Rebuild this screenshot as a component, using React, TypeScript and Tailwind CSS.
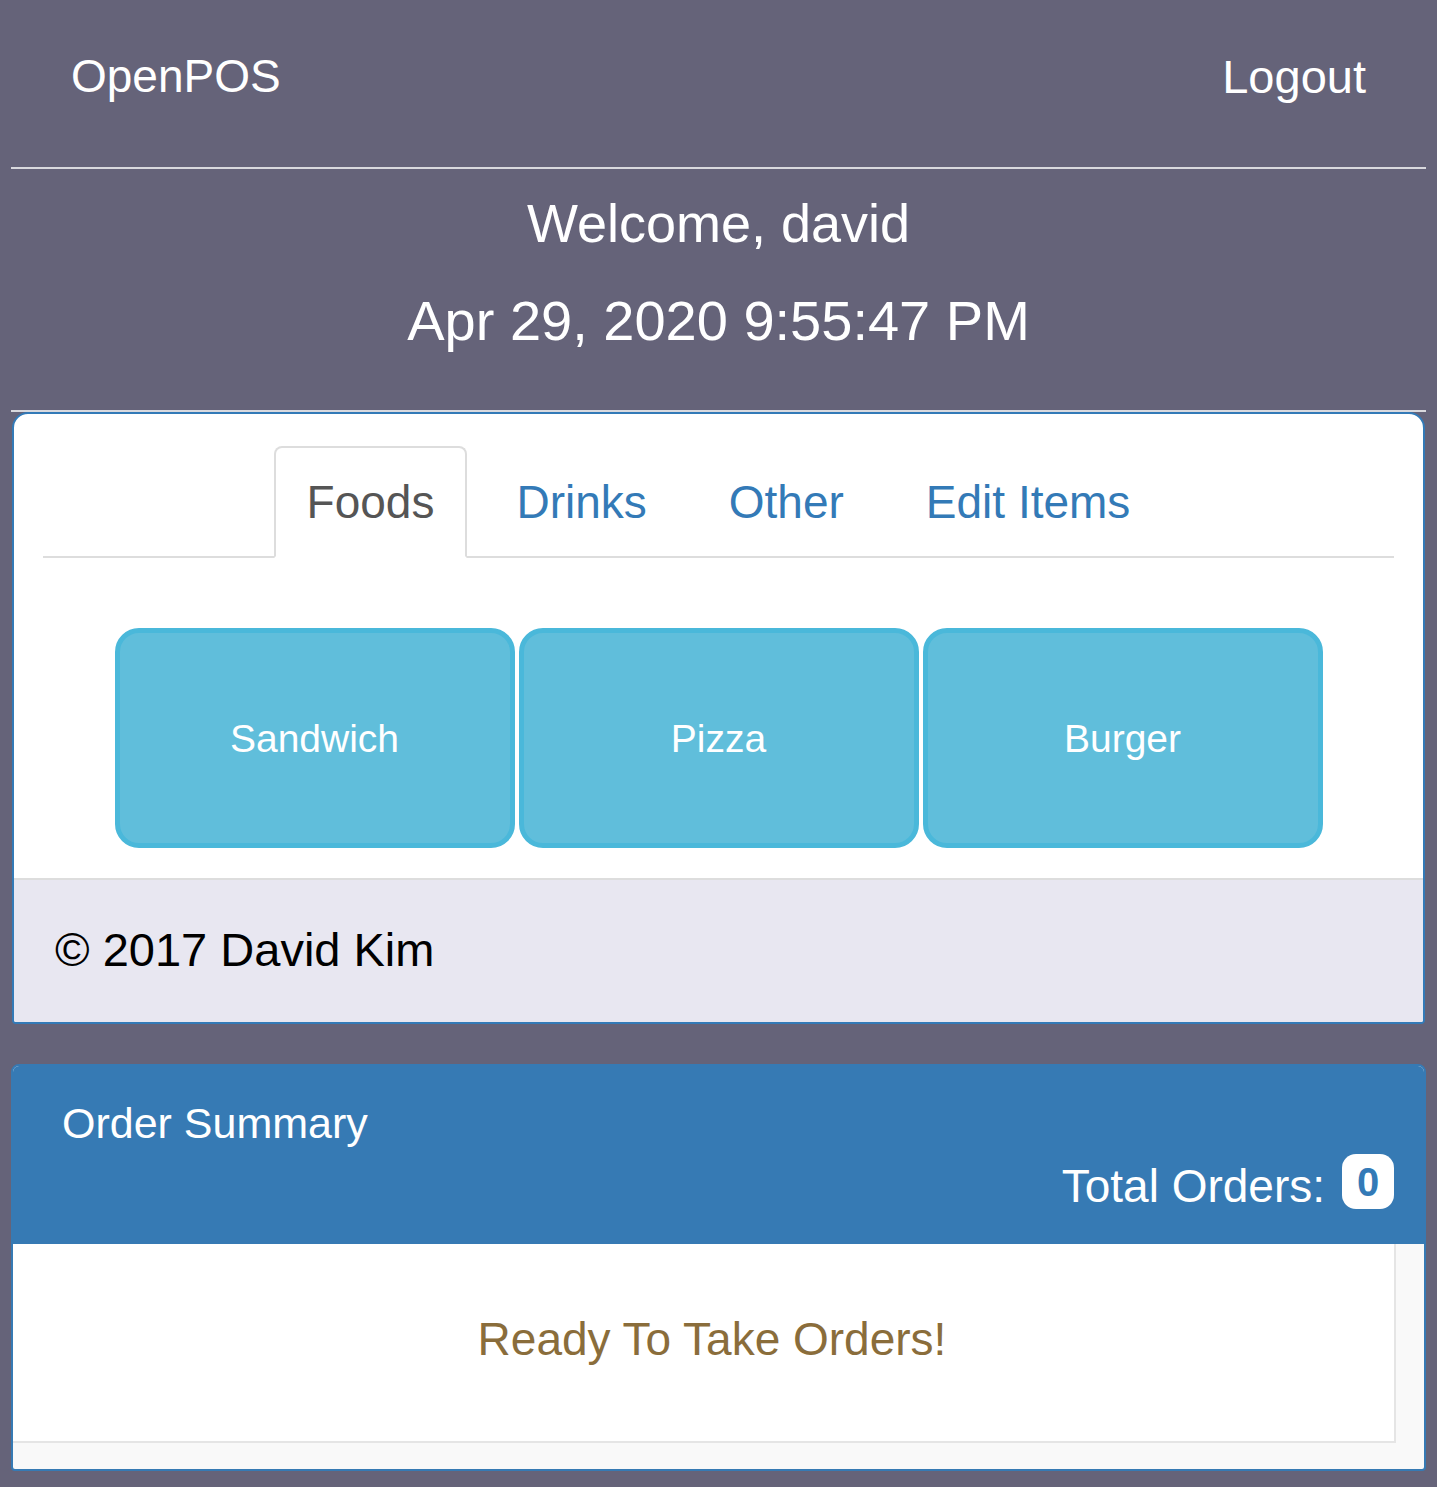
import React from "react";

export default function App() {
  const tabs = ["Foods", "Drinks", "Other", "Edit Items"];
  const items = ["Sandwich", "Pizza", "Burger"];
  return (
    <div className="min-h-[1487px] w-full bg-[#656379] px-[11px] pb-[17px] font-['Liberation_Sans',Arial,sans-serif]">
      <header className="flex h-[167px] items-start justify-between px-[60px] pt-[53px] text-white">
        <span className="text-[46px] leading-none">OpenPOS</span>
        <span className="text-[47px] leading-none">Logout</span>
      </header>
      <div className="h-[2px] bg-[#d9d9de]" />
      <div className="flex h-[241px] flex-col items-center text-white">
        <div className="mt-[27px] text-[54px] leading-none">Welcome, david</div>
        <div className="mt-[43px] text-[56px] leading-none">Apr 29, 2020 9:55:47 PM</div>
      </div>
      <div className="h-[2px] bg-[#d9d9de]" />

      <section className="mx-[1px] overflow-hidden rounded-t-[16px] rounded-b-[4px] border-2 border-[#337ab7] bg-white">
        <div className="px-[29px] pt-[32px]">
          <ul className="flex justify-center gap-[16px] border-b-2 border-[#dddddd]">
            {tabs.map((t, i) => (
              <li
                key={t}
                className={
                  i === 0
                    ? "-mb-[2px] rounded-t-[8px] border-2 border-[#dddddd] border-b-white bg-white px-[31px] py-[31px] text-[46px] leading-none text-[#555555]"
                    : "-mb-[2px] rounded-t-[8px] border-2 border-transparent px-[31px] py-[31px] text-[46px] leading-none text-[#337ab7]"
                }
              >
                {t}
              </li>
            ))}
          </ul>
          <div className="mt-[70px] mb-[30px] flex justify-center gap-[4px]">
            {items.map((it) => (
              <button
                key={it}
                className="flex h-[220px] w-[400px] items-center justify-center rounded-[24px] border-[5px] border-[#4ab8da] bg-[#60bedb] text-[39px] leading-none text-white"
              >
                {it}
              </button>
            ))}
          </div>
        </div>
        <footer className="flex h-[144px] items-center border-t-2 border-[#dddddd] bg-[#e8e7f1] px-[41px] pb-[4px] text-[47px] leading-none text-black">
          © 2017 David Kim
        </footer>
      </section>

      <section className="mt-[40px] overflow-hidden rounded-t-[8px] rounded-b-[4px] border-2 border-[#367ab4] bg-[#f9f9f9]">
        <div className="flex h-[178px] flex-col bg-[#367ab4] pl-[49px] pr-[30px] pt-[36px] text-white">
          <div className="text-[43px] leading-none">Order Summary</div>
          <div className="mt-[9px] flex items-end justify-end">
            <span className="text-[46px] leading-none">Total Orders:</span>
            <span className="ml-[17px] flex h-[55px] w-[52px] items-center justify-center rounded-[14px] bg-white text-[40px] font-bold leading-none text-[#337ab7]">
              0
            </span>
          </div>
        </div>
        <div className="pr-[28px] pb-[26px]">
          <div className="flex h-[199px] justify-center border-r-2 border-b-2 border-[#e5e5e5] bg-white pl-[17px] pt-[72px]">
            <span className="text-[46px] leading-none text-[#8a6d3b]">Ready To Take Orders!</span>
          </div>
        </div>
      </section>
    </div>
  );
}
